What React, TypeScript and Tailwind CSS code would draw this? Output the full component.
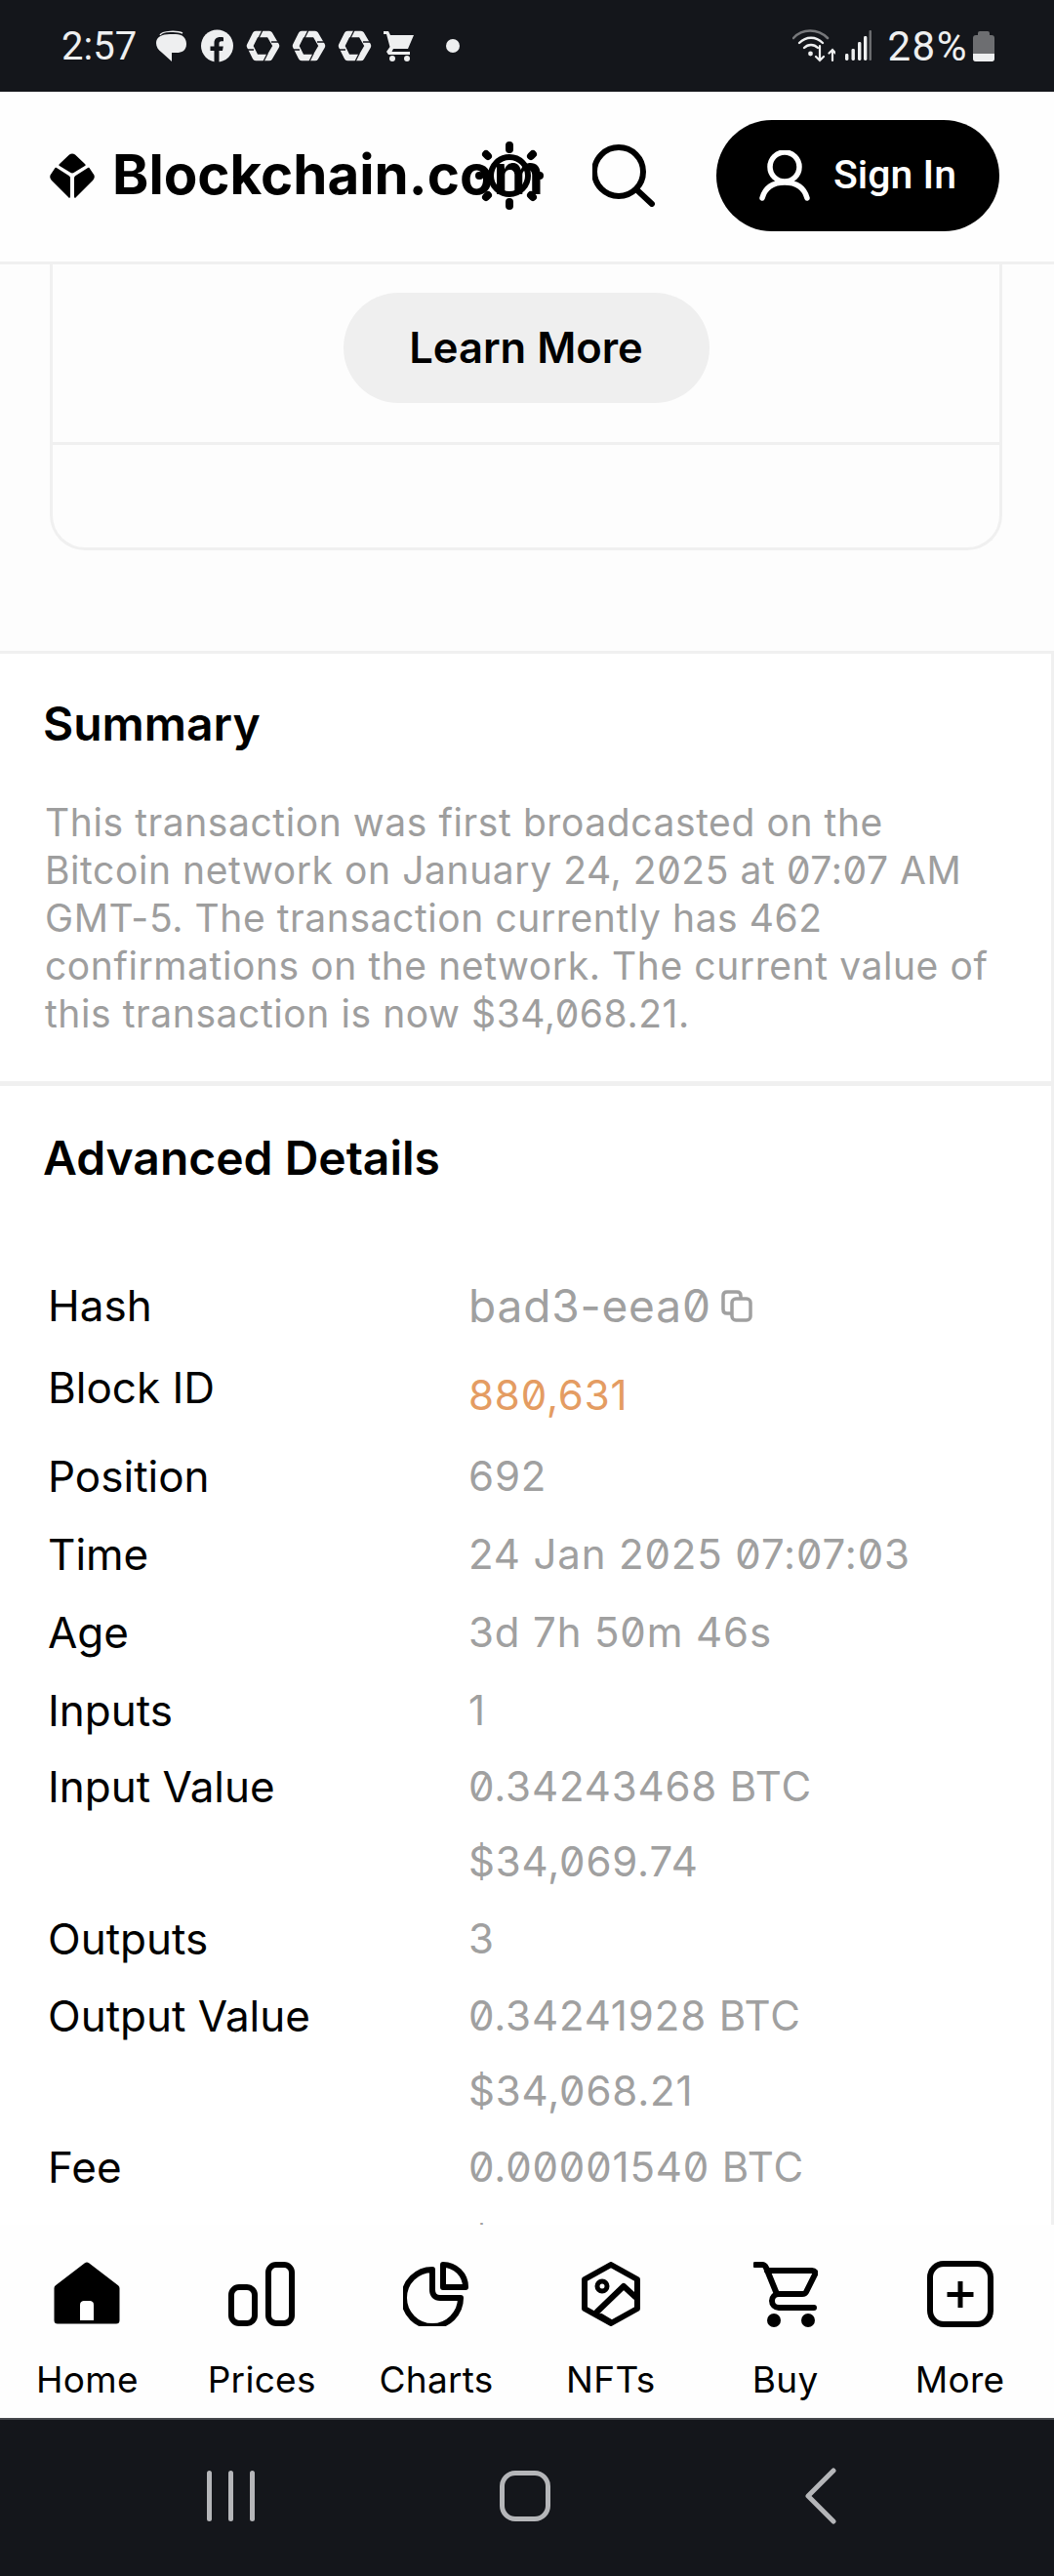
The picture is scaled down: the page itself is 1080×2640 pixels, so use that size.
import React from 'react';

const rows = [
  { label: 'Hash', value: 'bad3-eea0', cls: 'h-[80px]', copy: true },
  { label: 'Block ID', value: '880,631', cls: 'h-[94px]', link: true },
  { label: 'Position', value: '692', cls: 'h-[81px]' },
  { label: 'Time', value: '24 Jan 2025 07:07:03', cls: 'h-[80px]' },
  { label: 'Age', value: '3d 7h 50m 46s', cls: 'h-[80px]' },
  { label: 'Inputs', value: '1', cls: 'h-[80px]' },
  { label: 'Input Value', value: '0.34243468 BTC', cls: 'h-[76px]' },
  { label: '', value: '$34,069.74', cls: 'h-[78px]' },
  { label: 'Outputs', value: '3', cls: 'h-[80px]' },
  { label: 'Output Value', value: '0.34241928 BTC', cls: 'h-[78px]' },
  { label: '', value: '$34,068.21', cls: 'h-[76px]' },
  { label: 'Fee', value: '0.00001540 BTC', cls: 'h-[80px]' },
  { label: '', value: '$1.53', cls: 'h-[74px]' },
];

function HexIcon() {
  return (
    <svg width="35" height="34" viewBox="0 0 35 34" fill="none">
      <path d="M10 5 H24 L31 17 L24 29 H10 L4 17 Z" stroke="#eeeff0" strokeWidth="6.5" strokeLinejoin="round" />
      <path d="M13 9 L17 1 M26 13 H35 M22 25 L18 33 M8 21 H0" stroke="#14161b" strokeWidth="1.3" />
    </svg>
  );
}

function StatusBar() {
  return (
    <div className="flex h-[94px] flex-none items-center justify-between bg-[#14161b] pl-[63px] pr-[61px] text-[#eeeff0] font-['Roboto',sans-serif]">
      <div className="flex items-center">
        <span className="w-[97px] text-[40px] leading-none pt-[1px]">2:57</span>
        <svg width="32" height="34" viewBox="0 0 32 34" className="mr-[14px]">
          <path d="M4 6 C6 1.5 22 1.5 27 4" fill="none" stroke="#eeeff0" strokeWidth="1.4" />
          <path d="M14 5 H20 C27 5 31 9 31 15 C31 22 26 24 21 24 H16 V33 L6 24 C2 21 0 18 0 14 C0 8 6 5 14 5 Z" fill="#eeeff0" />
        </svg>
        <svg width="33" height="34" viewBox="0 0 33 34" className="mr-[13px]">
          <circle cx="16.5" cy="17" r="16.5" fill="#eeeff0" />
          <path d="M13.5 34 V22 H9.5 V17.5 H13.5 V14 C13.5 10 16 8 19.5 8 C21 8 22.5 8.2 23 8.4 V12.3 H21 C19 12.3 18.5 13.3 18.5 14.7 V17.5 H22.8 L22 22 H18.5 V34 Z" fill="#14161b" />
        </svg>
        <div className="flex gap-[12px]">
          <HexIcon />
          <HexIcon />
          <HexIcon />
        </div>
        <svg width="31" height="32" viewBox="0 0 31 32" className="ml-[12px]">
          <path d="M0 1 H5 L7 5 H31 L25 19 H10 L8.5 22 H27 V25 H5 L3 22 L6.5 17 L3 4 H0 Z" fill="#eeeff0" />
          <circle cx="9" cy="29" r="3" fill="#eeeff0" />
          <circle cx="24" cy="29" r="3" fill="#eeeff0" />
        </svg>
        <span className="ml-[33px] h-[14px] w-[14px] rounded-full bg-[#eeeff0]" />
      </div>
      <div className="flex items-center">
        <svg width="44" height="34" viewBox="0 0 44 34" fill="none" strokeLinecap="round">
          <path d="M1 9 C10 -1 26 -1 36 9" stroke="#77787b" strokeWidth="2.6" />
          <path d="M7 14 C14 7 24 7 31 14" stroke="#eeeff0" strokeWidth="2.4" />
          <path d="M12 19 C16 15 22 15 26 19" stroke="#eeeff0" strokeWidth="2.4" />
          <circle cx="18.5" cy="25" r="2.4" fill="#eeeff0" />
          <path d="M28 17 V32 M24 28 L28 32 L32 28 M41 32 V21 M37.5 24.5 L41 21 L44 24.5" stroke="#eeeff0" strokeWidth="2.2" />
        </svg>
        <svg width="27" height="32" viewBox="0 0 27 32" className="ml-[10px]">
          <rect x="0" y="24" width="3.4" height="7" rx="1.4" fill="#eeeff0" />
          <rect x="6.5" y="19" width="3.4" height="12" rx="1.4" fill="#eeeff0" />
          <rect x="13" y="12" width="3.4" height="19" rx="1.4" fill="#eeeff0" />
          <rect x="19" y="6" width="3.4" height="25" rx="1.4" fill="#eeeff0" />
          <rect x="24.5" y="0" width="2.5" height="31" rx="1" fill="#6b6c6f" />
        </svg>
        <span className="ml-[17px] text-[42px] leading-none tracking-[1.5px] pt-[1px]">28%</span>
        <div className="ml-[5px] flex w-[22px] flex-col items-center">
          <div className="h-[4px] w-[12px] rounded-t-[2px] bg-[#6d6e71]" />
          <div className="flex h-[27px] w-[22px] flex-col justify-end overflow-hidden rounded-[3px] bg-[#6d6e71]">
            <div className="h-[8px] bg-[#eeeff0]" />
          </div>
        </div>
      </div>
    </div>
  );
}

function Header() {
  return (
    <div className="flex h-[177px] flex-none items-center justify-between border-b-[3px] border-[#f0f0f0] bg-[#fefefe] pl-[51px] pr-[56px] pb-[3px]">
      <div className="flex w-[400px] flex-none items-center gap-[18px] whitespace-nowrap">
        <svg width="46" height="46" viewBox="0 0 46 46" fill="#000" className="flex-none">
          <path d="M20 1.5 C22 0 24 0 26 1.5 L36 11 C37 12 37 12.5 36 13 L24.5 20 C23.5 20.6 22.5 20.6 21.5 20 L10 13 C9 12.5 9 12 10 11 Z" />
          <path d="M5.5 15 C6 14.6 6.5 14.6 7 15 L19.5 23 C20.5 23.7 21 24.5 21 25.5 V44 C21 46 20 46.5 19 45 L2 28 C0 26 -0.5 23 1.5 21 Z" />
          <path d="M40.5 15 C40 14.6 39.5 14.6 39 15 L26.5 23 C25.5 23.7 25 24.5 25 25.5 V44 C25 46 26 46.5 27 45 L44 28 C46 26 46.5 23 44.5 21 Z" />
        </svg>
        <span className="font-['Inter',sans-serif] text-[56.5px] font-bold leading-none text-black">Blockchain.com</span>
      </div>
      <div className="flex items-center">
        <svg width="70" height="70" viewBox="0 0 70 70" className="flex-none" fill="none" stroke="#000">
          <circle cx="35" cy="35" r="19" strokeWidth="6" />
          <g strokeWidth="8" strokeLinecap="round">
            <path d="M35 4 V8 M35 62 V66 M11 13 L13 15 M59 13 L57 15 M11 57 L13 55 M59 57 L57 55 M4 35 H4.5 M65.5 35 H66" />
          </g>
        </svg>
        <svg width="64" height="64" viewBox="0 0 64 64" className="ml-[50px] flex-none" fill="none" stroke="#000" strokeWidth="6" strokeLinecap="round">
          <circle cx="27" cy="28" r="25" />
          <path d="M46 47 L61 61" />
        </svg>
        <button className="ml-[63px] flex h-[114px] w-[290px] flex-none items-center justify-center gap-[24px] rounded-full bg-black text-white">
          <svg width="52" height="52" viewBox="0 0 52 52" fill="none" stroke="#fff" strokeWidth="5.5" strokeLinecap="round">
            <circle cx="26" cy="17" r="15" />
            <path d="M3 49 C6 38 14 33 26 33 C38 33 46 38 49 49" />
          </svg>
          <span className="font-['Roboto',sans-serif] text-[41px] font-medium leading-none">Sign In</span>
        </button>
      </div>
    </div>
  );
}

function Row({ row }: { row: (typeof rows)[number] }) {
  return (
    <div className={`flex flex-none items-center ${row.cls}`}>
      <span className={`w-[431px] flex-none text-[44px] leading-none text-black ${row.link ? '-translate-y-[3px]' : ''}`}>{row.label}</span>
      <span className={`leading-none slashed-zero tracking-[0.85px] ${row.copy ? 'text-[46px]' : 'text-[42px]'} ${row.link ? 'translate-y-[5px] text-[#e49c62]' : 'text-[#a0a0a0]'}`}>{row.value}</span>
      {row.copy && (
        <svg width="32" height="33" viewBox="0 0 32 33" className="ml-[10px]" fill="none" stroke="#a0a0a0" strokeWidth="3.5">
          <rect x="11" y="9" width="19" height="22" rx="4" />
          <path d="M11 24 H6 C3.5 24 2 22.5 2 20 V6 C2 3.5 3.5 2 6 2 H16 C18.5 2 20 3.5 20 6 V9" />
        </svg>
      )}
    </div>
  );
}

function BottomNav() {
  const items = [
    {
      label: 'Home',
      icon: (
        <svg width="68" height="66" viewBox="0 0 68 66">
          <path d="M34 4 L64 27 V60 H4 V27 Z" fill="#000" stroke="#000" strokeWidth="7" strokeLinejoin="round" />
          <path d="M27 60 V44 C27 41 29 40 31 40 H37 C39 40 41 41 41 44 V60 Z" fill="#fff" />
        </svg>
      ),
    },
    {
      label: 'Prices',
      icon: (
        <svg width="68" height="66" viewBox="0 0 68 66" fill="none" stroke="#000" strokeWidth="6">
          <rect x="3" y="26" width="24" height="37" rx="8" />
          <rect x="41" y="3" width="24" height="60" rx="8" />
        </svg>
      ),
    },
    {
      label: 'Charts',
      icon: (
        <svg width="68" height="66" viewBox="0 0 68 66" fill="none" stroke="#000" strokeWidth="6" strokeLinejoin="round">
          <path d="M30 8 A29 29 0 1 0 59 37 H38 C33 37 30 34 30 29 Z" />
          <path d="M41 3 A23 23 0 0 1 64 26 H41 Z" />
        </svg>
      ),
    },
    {
      label: 'NFTs',
      icon: (
        <svg width="60" height="66" viewBox="0 0 60 66" fill="none" stroke="#000" strokeWidth="6" strokeLinejoin="round" strokeLinecap="round">
          <path d="M30 3 L57 18 V48 L30 63 L3 48 V18 Z" />
          <circle cx="21" cy="25" r="5" strokeWidth="5" />
          <path d="M16 51 L43 25 L55 36" />
          <path d="M20 56 L30 62" />
        </svg>
      ),
    },
    {
      label: 'Buy',
      icon: (
        <svg width="66" height="67" viewBox="0 0 66 67" fill="none" stroke="#000" strokeWidth="6" strokeLinecap="round" strokeLinejoin="round">
          <path d="M2 3 H9 C11 3 12 4 13 6 L24 33" />
          <path d="M14 9 H60 C63 9 64 11 63 13 L54 31 C53 33 52 33 50 33 H26 C22 33 19 36 19 40 C19 44 22 47 26 47 H62" />
          <circle cx="21" cy="60" r="7" fill="#000" stroke="none" />
          <circle cx="56" cy="60" r="7" fill="#000" stroke="none" />
        </svg>
      ),
    },
    {
      label: 'More',
      icon: (
        <svg width="68" height="68" viewBox="0 0 68 68" fill="none" stroke="#000" strokeWidth="6">
          <rect x="3" y="3" width="62" height="62" rx="14" />
          <path d="M34 21 V48 M20.5 34.5 H47.5" strokeWidth="5" />
        </svg>
      ),
    },
  ];

  return (
    <div className="grid h-[198px] flex-none grid-cols-6 bg-[#fefefe] pr-[7px]">
      {items.map((item) => (
        <div key={item.label} className="flex flex-col items-center pt-[37px]">
          <div className="flex h-[68px] items-center justify-center">{item.icon}</div>
          <span className="mt-[32px] text-[37px] leading-[44px] tracking-[0.3px] text-black">{item.label}</span>
        </div>
      ))}
    </div>
  );
}

export default function App() {
  return (
    <div className="flex h-[2640px] w-[1080px] flex-col overflow-hidden bg-white font-['Inter',sans-serif]">
      <StatusBar />
      <Header />

      <main className="min-h-0 flex-1 overflow-hidden bg-[#fdfdfd]">
        <div className="ml-[51px] mr-[53px] h-[293px] rounded-b-[36px] border-x-[3px] border-b-[3px] border-[#f0f0f0]">
          <div className="flex h-[185px] justify-center border-b-[3px] border-[#f0f0f0] pt-[29px]">
            <button className="h-[113px] w-[375px] rounded-full bg-[#efefef] text-[43.5px] font-semibold leading-none text-black">Learn More</button>
          </div>
        </div>

        <section className="mt-[103px] border-t-[3px] border-r-[3px] border-[#f0f0f0] bg-white">
          <div className="pl-[44px] pt-[42px] pb-[45px]">
            <h2 className="text-[48px] font-semibold leading-[60px] text-black">Summary</h2>
            <p className="mt-[46px] w-[990px] pl-[2px] text-[39px] leading-[49px] slashed-zero tracking-[0.58px] text-[#9e9e9e]">
              This transaction was first broadcasted on the Bitcoin network on January 24, 2025 at 07:07 AM GMT-5. The transaction currently has 462 confirmations on the network. The current value of this transaction is now $34,068.21.
            </p>
          </div>
          <div className="h-[5px] bg-[#f0f0f0]" />
          <div className="pt-[44px]">
            <h2 className="pl-[44px] text-[48px] font-semibold leading-[60px] text-black">Advanced Details</h2>
            <div className="mt-[81px] pl-[49px]">
              {rows.map((row, i) => (
                <Row key={i} row={row} />
              ))}
            </div>
          </div>
        </section>
      </main>

      <BottomNav />

      <div className="flex h-[162px] flex-none items-center border-t-[2px] border-[#45474c] bg-[#14161b] pb-[4px]">
        <div className="ml-[212px] flex gap-[17px]">
          <span className="h-[52px] w-[5px] rounded-full bg-[#b5b6b9]" />
          <span className="h-[52px] w-[5px] rounded-full bg-[#b5b6b9]" />
          <span className="h-[52px] w-[5px] rounded-full bg-[#b5b6b9]" />
        </div>
        <div className="ml-[251px] h-[52px] w-[52px] rounded-[16px] border-[5px] border-[#b5b6b9]" />
        <svg width="34" height="58" viewBox="0 0 34 58" className="ml-[260px]" fill="none" stroke="#b5b6b9" strokeWidth="5" strokeLinecap="round" strokeLinejoin="round">
          <path d="M30 3 L4 29 L30 55" />
        </svg>
      </div>
    </div>
  );
}
